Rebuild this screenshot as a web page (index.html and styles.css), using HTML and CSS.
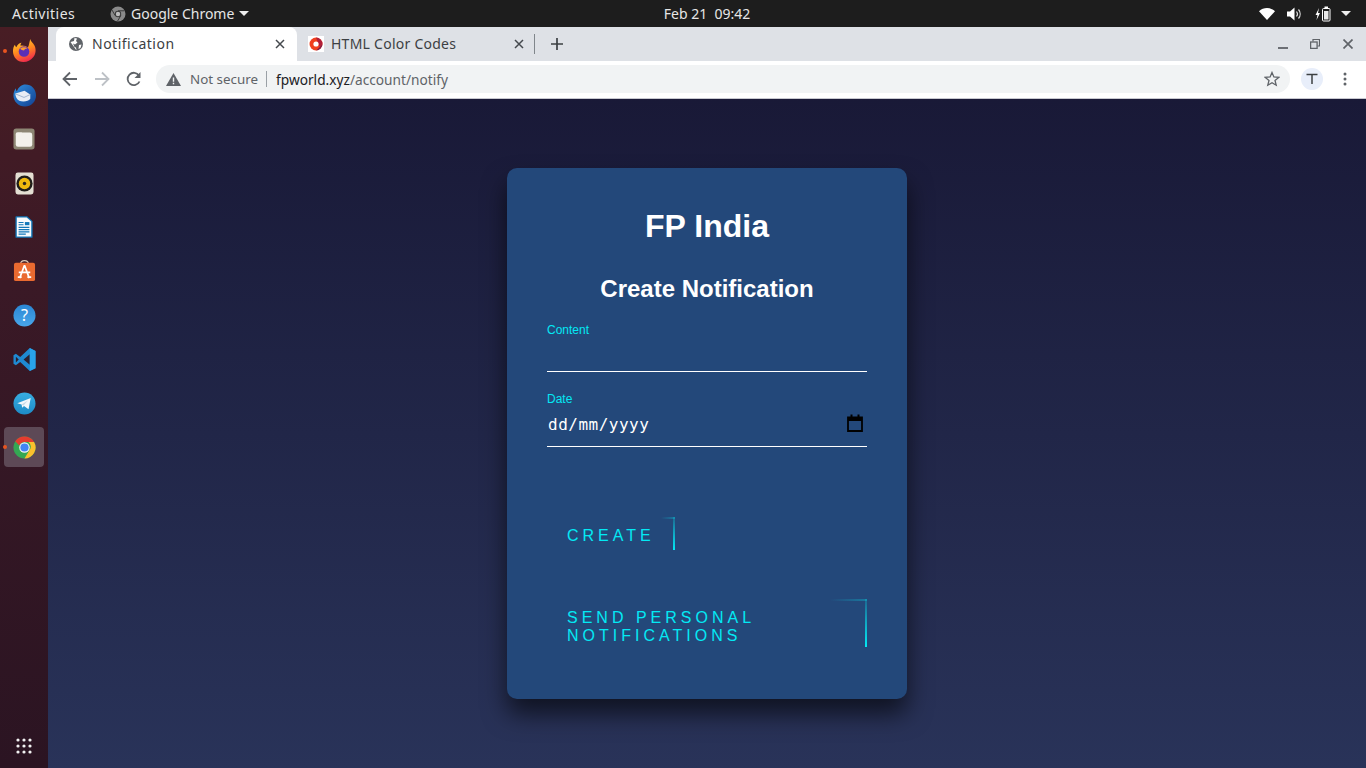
FILE: index.html
```html
<!DOCTYPE html>
<html lang="en">
<head>
<meta charset="utf-8">
<title>Notification</title>
<link rel="stylesheet" href="styles.css">
</head>
<body>
<header class="topbar">
  <div class="top-left">
    <span class="activities">Activities</span>
    <span class="appmenu">
      <svg class="app-ic" width="16" height="16" viewBox="0 0 16 16"><circle cx="8" cy="8" r="7.5" fill="#8a8a8a"/><circle cx="8" cy="8" r="3.2" fill="#3a3a3a"/><circle cx="8" cy="8" r="2.2" fill="#bdbdbd"/><path d="M8 4.8h6.4M5.2 9.6 2 4M10.8 9.6 7.6 15" stroke="#3a3a3a" stroke-width="1" fill="none"/></svg>
      <span>Google Chrome</span>
      <i class="caret"></i>
    </span>
  </div>
  <div class="clock">Feb 21&nbsp; 09:42</div>
  <div class="tray">
    <svg width="16" height="12" viewBox="0 0 16 12"><path d="M0 3.2C4.5-1 11.5-1 16 3.2L8 12Z" fill="#fff"/></svg>
    <svg width="16" height="14" viewBox="0 0 16 14"><path d="M0 4.500h3L7.500.5v13L3 9.500H0Z" fill="#fff"/><path d="M9.500 4.500c1.200 1.500 1.200 3.500 0 5M11.500 2.500c2.200 2.600 2.200 6.400 0 9" stroke="#ddd" stroke-width="1.200" fill="none"/></svg>
    <svg width="16" height="16" viewBox="0 0 16 16"><path d="M4 2 0.500 9h2L1.500 14 5 7H3Z" fill="#fff"/><rect x="7.500" y="2.500" width="7.500" height="12.500" rx="1" fill="#1d1d1d" stroke="#fff"/><rect x="9.500" y="0.500" width="3.500" height="2" fill="#fff"/><rect x="9" y="5" width="4.500" height="8.500" fill="#e8e8e8"/></svg>
    <i class="caret"></i>
  </div>
</header>
<div class="desktop">
  <nav class="dock">
    <div class="dock-item"><i class="run-dot"></i>
      <svg class="ic-firefox" width="25" height="25" viewBox="0 0 26 26"><defs><linearGradient id="ff" x1="0.2" y1="0" x2="0.6" y2="1"><stop offset="0" stop-color="#ffd02e"/><stop offset=".5" stop-color="#ff8a1f"/><stop offset="1" stop-color="#f0264f"/></linearGradient></defs><path d="M19 1c.4 3 3 4 4.500 7 2 4.500 1 9-1.500 12-2.500 3.200-6 5-10 5C5.500 25 1 20 1 13.500 1 11 1.800 8.500 3 7c.3 1.200.8 2 1.500 2.500C5.500 7 8 5 10 5c-1 1 -1.200 2-1 3 3-.5 6 .5 7.500 2C18 7 18 4 19 1Z" fill="url(#ff)"/><circle cx="12.500" cy="14" r="5.500" fill="#5b2fb5"/><path d="M8.500 11c2-2 6-2 7.500 0-2 0-3 1-3.500 2-1.500 0-3-.5-4-2Z" fill="#ff9a2e"/></svg>
    </div>
    <div class="dock-item">
      <svg width="25" height="25" viewBox="0 0 26 26"><defs><linearGradient id="tb" x1="0" y1="0" x2="1" y2="1"><stop offset="0" stop-color="#2f8fe0"/><stop offset="1" stop-color="#123f8f"/></linearGradient></defs><path d="M14 1.500c6.500 0 11 5 11 11.500S20 24.500 13.500 24.500 1.500 19.500 1.500 13c0-3 1-5.500 2.500-7.500 0 1.500.5 2.500 1 3C7 4 10 1.500 14 1.500Z" fill="url(#tb)"/><path d="M3.500 11 13 8l6 4v4.500c-2 3-8 3.500-11.500 2C5 17.500 3.500 14 3.500 11Z" fill="#e8edf5"/><path d="M4 11.500 12.500 15l6.500-3" stroke="#9fb4cf" stroke-width="1" fill="none"/></svg>
    </div>
    <div class="dock-item">
      <svg width="22" height="22" viewBox="0 0 24 24"><rect width="23" height="23" x=".5" y=".5" rx="3" fill="#8d8674"/><rect x="3" y="5" width="18" height="15.500" rx="2.500" fill="#f3f1ec"/><path d="M3 8V6.500A1.500 1.500 0 0 1 4.500 5h5l1.500 1.500" fill="#f3f1ec"/></svg>
    </div>
    <div class="dock-item">
      <svg width="19" height="23" viewBox="0 0 20 24"><rect width="19" height="23" x=".5" y=".5" rx="2.500" fill="#e4dfd3"/><circle cx="10" cy="12" r="8.500" fill="#1f1d1a"/><circle cx="10" cy="12" r="6" fill="#eeb90f"/><circle cx="10" cy="12" r="1.800" fill="#2a2722"/></svg>
    </div>
    <div class="dock-item">
      <svg width="18" height="22" viewBox="0 0 20 24"><path d="M1.500 0h12L19.500 5.500V23a1 1 0 0 1-1 1h-17a1 1 0 0 1-1-1V1a1 1 0 0 1 1-1Z" fill="#1277b8"/><path d="M2 1.500h11L18 6v16.500H2Z" fill="#f7fafc"/><rect x="11" y="6.500" width="5" height="3.500" fill="#1277b8"/><path d="M4 7h5.500M4 9.500h5.500M4 12.500h12M4 15h12M4 17.500h12M4 20h8" stroke="#1277b8" stroke-width="1.300"/></svg>
    </div>
    <div class="dock-item">
      <svg class="ic-up" width="23" height="23" viewBox="0 0 24 24"><path d="M8 5C8 .5 16 .5 16 5" stroke="#d9c9b8" stroke-width="1.200" fill="none"/><rect x="1" y="4" width="22" height="19" rx="2" fill="#ea6a30"/><path d="M12 6.500 7 20M12 6.500 17 20M6 14h12M5 19h4M15 19h4" stroke="#fff" stroke-width="1.800" fill="none"/></svg>
    </div>
    <div class="dock-item">
      <svg width="23" height="23" viewBox="0 0 24 24"><defs><linearGradient id="hp" x1="0" y1="0" x2="0" y2="1"><stop offset="0" stop-color="#2a86d4"/><stop offset="1" stop-color="#49a6ea"/></linearGradient></defs><circle cx="12" cy="12" r="11.500" fill="url(#hp)"/><text x="12" y="18" class="help-mark">?</text></svg>
    </div>
    <div class="dock-item">
      <svg width="23" height="23" viewBox="0 0 24 24"><path d="M17.500 0 23.500 3v18l-6 3L7.500 14.500 3 18l-2.500-1.500v-9L3 6l4.500 3.500Z" fill="#1f8ad2"/><path d="M17.500 6.500 11 12l6.500 5.500Z" fill="#2b2030"/><path d="M3 9v6l3-3Z" fill="#2b2030"/><path d="M17.500 0 23.500 3v18l-6 3Z" fill="#29a3ea"/></svg>
    </div>
    <div class="dock-item">
      <svg width="23" height="23" viewBox="0 0 24 24"><defs><linearGradient id="tg" x1="0" y1="0" x2="0" y2="1"><stop offset="0" stop-color="#38aee2"/><stop offset="1" stop-color="#1d8ac6"/></linearGradient></defs><circle cx="12" cy="12" r="11.500" fill="url(#tg)"/><path d="M4.500 11.800 18.500 6.200 16.200 18 11.500 14.500 9.500 16.500 9 13Z" fill="#f2f7fb"/><path d="M9 13 15.500 8.800 11 14Z" fill="#c5d9e6"/></svg>
    </div>
    <div class="dock-item active"><i class="run-dot"></i>
      <svg width="23" height="23" viewBox="0 0 24 24"><circle cx="12" cy="12" r="11.500" fill="#34a853"/><path d="M12 .5a11.500 11.500 0 0 1 10 5.750H12A5.750 5.750 0 0 0 6.600 10L2.300 5.500A11.500 11.500 0 0 1 12 .5Z" fill="#e53c2f"/><path d="M22 6.250A11.500 11.500 0 0 1 12 23.500l5-8.500a5.750 5.750 0 0 0-1-8.750Z" fill="#fbc02d"/><circle cx="12" cy="12" r="5.500" fill="#f4f4f4"/><circle cx="12" cy="12" r="4.300" fill="#4285f4"/></svg>
    </div>
    <div class="dock-apps">
      <svg width="16" height="16" viewBox="0 0 16 16" fill="#f2f2f2"><circle cx="2" cy="2" r="1.600"/><circle cx="8" cy="2" r="1.600"/><circle cx="14" cy="2" r="1.600"/><circle cx="2" cy="8" r="1.600"/><circle cx="8" cy="8" r="1.600"/><circle cx="14" cy="8" r="1.600"/><circle cx="2" cy="14" r="1.600"/><circle cx="8" cy="14" r="1.600"/><circle cx="14" cy="14" r="1.600"/></svg>
    </div>
  </nav>
  <div class="browser">
    <div class="tabstrip">
      <div class="tab tab-active">
        <svg class="fav" width="14" height="14" viewBox="0 0 14 14"><circle cx="7" cy="7" r="7" fill="#5f6368"/><path d="M1.500 5 5 4l.5-3L8 1.500 7 4l1.500 1.500L6 7.500 4 6.500 5.500 10l1.500.5.500 3M10 8l2.500-.5-1 3.500-2 1Z" fill="#fff"/></svg>
        <span class="tab-title title-a">Notification</span>
        <svg class="tab-x" width="10" height="10" viewBox="0 0 10 10"><path d="M1 1l8 8M9 1l-8 8" stroke="#45494e" stroke-width="1.500"/></svg>
      </div>
      <div class="tab tab-idle">
        <svg class="fav fav-box" width="16" height="16" viewBox="0 0 16 16"><rect width="16" height="16" fill="#fff"/><circle cx="8" cy="8" r="6.500" fill="#f0401f"/><path d="M14.500 8A6.500 6.500 0 0 1 8 14.500C10.500 12.500 12 10.500 14.500 8Z" fill="#7f1d4a"/><path d="M8 1.500A6.500 6.500 0 0 1 14.500 8c-1 1-2 2-3 2.500Z" fill="#b01f3a"/><circle cx="8" cy="8" r="2.600" fill="#fff"/></svg>
        <span class="tab-title title-b">HTML Color Codes</span>
        <svg class="tab-x" width="10" height="10" viewBox="0 0 10 10"><path d="M1 1l8 8M9 1l-8 8" stroke="#45494e" stroke-width="1.500"/></svg>
      </div>
      <i class="tab-sep"></i>
      <svg class="plus" width="12" height="12" viewBox="0 0 12 12"><path d="M6 0v12M0 6h12" stroke="#3c4043" stroke-width="1.700"/></svg>
      <div class="winctl">
        <svg width="10" height="10" viewBox="0 0 10 10"><path d="M0 9h10" stroke="#5f6368" stroke-width="1.800"/></svg>
        <svg width="10" height="10" viewBox="0 0 10 10"><path d="M3 2.500V.5h6.500V7H7.500" stroke="#5f6368" stroke-width="1.200" fill="none"/><rect x=".6" y="3" width="6.500" height="6.400" stroke="#5f6368" stroke-width="1.300" fill="none"/></svg>
        <svg class="win-close" width="10" height="10" viewBox="0 0 10 10"><path d="M.5.500l9 9M9.500.500l-9 9" stroke="#5f6368" stroke-width="1.700"/></svg>
      </div>
    </div>
    <div class="toolbar">
      <svg class="nav" width="16" height="16" viewBox="0 0 16 16"><path d="M15 8H2M8 1.500 1.500 8 8 14.500" stroke="#5f6368" stroke-width="1.800" fill="none"/></svg>
      <svg class="nav" width="16" height="16" viewBox="0 0 16 16"><path d="M1 8h13M8 1.500 14.500 8 8 14.500" stroke="#bdc1c6" stroke-width="1.800" fill="none"/></svg>
      <svg class="nav" width="16" height="16" viewBox="0 0 16 16"><path d="M13.500 10.500A6.200 6.200 0 1 1 13 4.500" stroke="#5f6368" stroke-width="1.800" fill="none"/><path d="M14.500 1v6h-6Z" fill="#5f6368"/></svg>
      <div class="omnibox">
        <svg class="warn" width="15" height="13" viewBox="0 0 15 13"><path d="M7.500 0 15 13H0Z" fill="#5f6368"/><path d="M6.800 4.500h1.400v4.200H6.800ZM6.800 9.800h1.400v1.400H6.800Z" fill="#f1f3f4"/></svg>
        <span class="insecure">Not secure</span>
        <i class="omni-sep"></i>
        <span class="url"><b>fpworld.xyz</b>/account/notify</span>
        <svg class="star" width="16" height="16" viewBox="0 0 16 16"><path d="M8 1.500 9.900 6l4.800.4-3.700 3.100 1.200 4.700L8 11.700l-4.200 2.500L5 9.500 1.300 6.400 6.100 6Z" stroke="#5f6368" stroke-width="1.300" fill="none"/></svg>
      </div>
      <div class="avatar"><svg width="12" height="12" viewBox="0 0 12 12"><path d="M.5 1.500h11M6 1.500v9.500" stroke="#3c4043" stroke-width="1.500" fill="none"/></svg></div>
      <svg class="menu" width="4" height="14" viewBox="0 0 4 14" fill="#5f6368"><circle cx="2" cy="2" r="1.500"/><circle cx="2" cy="7" r="1.500"/><circle cx="2" cy="12" r="1.500"/></svg>
    </div>
    <main class="page">
      <form class="card">
        <h1 class="brand">FP India</h1>
        <h2 class="heading">Create Notification</h2>
        <label class="field field-content">
          <span class="field-label">Content</span>
          <input class="field-input" type="text">
        </label>
        <div class="field field-date">
          <span class="field-label">Date</span>
          <div class="date-row">
            <span class="date-text">dd/mm/yyyy</span>
            <svg class="cal" width="16" height="18" viewBox="0 0 16 18"><path d="M1 3.500h14V17H1Z" fill="none" stroke="#000" stroke-width="1.800"/><path d="M1 3h14v4H1ZM3.500.5h2V3h-2ZM10.500.5h2V3h-2Z" fill="#000"/></svg>
          </div>
        </div>
        <button class="neon neon-create" type="button">Create</button>
        <button class="neon neon-send" type="button">Send personal notifications</button>
      </form>
    </main>
  </div>
</div>
</body>
</html>
```

FILE: styles.css
```css
* { box-sizing: border-box; }
html, body { margin: 0; height: 100%; overflow: hidden; }
body { width: 1366px; height: 768px; display: flex; flex-direction: column; font-family: "Noto Sans", sans-serif; }
i { display: block; }

.topbar { height: 27px; flex: none; background: #1d1d1d; color: #e6e6e6; font-size: 14px; display: grid; grid-template-columns: 1fr auto 1fr; align-items: center; padding: 0 12px; }
.top-left { display: flex; align-items: center; }
.activities { width: 98px; letter-spacing: .5px; }
.appmenu { display: flex; align-items: center; }
.app-ic { margin-right: 5px; }
.caret { width: 0; height: 0; border-left: 5px solid transparent; border-right: 5px solid transparent; border-top: 5px solid #eee; margin-left: 5px; }
.clock { text-align: center; margin-left: 48px; }
.tray { display: flex; justify-content: flex-end; align-items: center; gap: 12px; padding-right: 3px; }
.tray .caret { margin-left: -2px; }

.desktop { flex: 1; display: flex; min-height: 0; }
.dock { width: 48px; flex: none; background: linear-gradient(180deg, #481d24 0%, #3a1926 35%, #2b1422 100%); display: flex; flex-direction: column; align-items: center; padding-top: 2px; }
.dock-item { position: relative; width: 40px; height: 40px; margin: 2px 0; display: flex; align-items: center; justify-content: center; border-radius: 4px; }
.dock-item.active { background: #5d4956; }
.ic-firefox { margin-top: -2px; }
.ic-up { margin-top: -2px; }
.run-dot { position: absolute; left: -1px; top: 18px; width: 4px; height: 4px; border-radius: 50%; background: #e95420; }
.dock-apps { margin-top: auto; height: 44px; display: flex; align-items: center; justify-content: center; }
.help-mark { font-family: "Noto Sans", sans-serif; font-size: 17px; fill: #fff; text-anchor: middle; }

.browser { flex: 1; display: flex; flex-direction: column; min-width: 0; }
.tabstrip { height: 34px; flex: none; background: #dee1e6; display: flex; align-items: center; padding-left: 8px; color: #3c4043; font-size: 14px; }
.tab { width: 241px; height: 34px; display: flex; align-items: center; padding: 0 12px 1px 12px; }
.tab-active { background: #fff; border-radius: 8px 8px 0 0; padding-left: 13px; }
.tab-idle { padding-right: 14px; }
.fav { margin-right: 9px; flex: none; }
.fav-box { margin-right: 7px; margin-left: -1px; }
.tab-title { flex: 1; white-space: nowrap; }
.title-a { letter-spacing: .5px; }
.title-b { letter-spacing: .25px; }
.tab-x { flex: none; }
.tab-active .tab-x { margin-right: 0; }
.tab-sep { width: 1px; height: 20px; background: #80868b; margin-left: -4px; }
.plus { margin-left: 16px; }
.winctl { margin-left: auto; display: flex; align-items: center; gap: 22px; padding-right: 13px; }
.win-close { margin-left: 1px; }

.toolbar { height: 38px; flex: none; background: #fff; border-bottom: 1px solid #c8c8d0; display: flex; align-items: center; padding: 0 0 1px 14px; }
.nav { margin-right: 16px; flex: none; }
.omnibox { margin-left: -2px; width: 1134px; height: 28px; border-radius: 14px; background: #f1f3f4; display: flex; align-items: center; padding: 0 10px 0 10px; font-size: 14px; color: #5f6368; }
.warn { margin-right: 9px; }
.insecure { font-size: 13.4px; }
.omni-sep { width: 1px; height: 16px; background: #9aa0a6; margin: 0 9px 0 8px; }
.url { flex: 1; font-size: 13.7px; }
.url b { font-weight: 400; color: #202124; }
.avatar { width: 22px; height: 22px; margin-left: 11px; border-radius: 50%; background: #e8eefa; display: flex; align-items: center; justify-content: center; }
.menu { margin-left: 20px; }

.page { flex: 1; background: linear-gradient(180deg, #191937 0%, #293359 100%); display: flex; justify-content: flex-start; padding: 69px 0 0 459px; }
.card { width: 400px; height: 531px; background: #23487a; border-radius: 10px; padding: 40px; box-shadow: 0 15px 25px rgba(0, 0, 0, .6); font-family: "Liberation Sans", Arial, sans-serif; display: flex; flex-direction: column; align-items: flex-start; }
.brand { margin: 0; width: 100%; text-align: center; color: #fff; font-size: 32px; line-height: 37px; font-weight: 700; }
.heading { margin: 30px 0 0; width: 100%; text-align: center; color: #fff; font-size: 24px; line-height: 28px; font-weight: 700; }
.field { display: block; width: 100%; }
.field-label { display: block; color: #03e9f4; font-size: 12px; line-height: 14px; }
.field-content { margin-top: 20px; }
.field-input { display: block; width: 100%; height: 35px; margin: 0; padding: 0; background: transparent; border: 0; border-bottom: 1px solid #fff; outline: 0; color: #fff; font-size: 16px; }
.field-date { margin-top: 20px; }
.date-row { height: 41px; border-bottom: 1px solid #fff; display: flex; align-items: center; justify-content: space-between; padding: 0 4px 4px 1px; }
.date-text { color: #fff; font-family: "DejaVu Sans Mono", monospace; font-size: 16px; letter-spacing: .5px; }
.cal { flex: none; margin-top: -2px; }

.neon { position: relative; display: block; padding: 10px 20px; background: transparent; border: 0; color: #03e9f4; font: 16px/18px "Liberation Sans", Arial, sans-serif; letter-spacing: 4px; text-transform: uppercase; text-align: left; }
.neon::before { content: ""; position: absolute; top: 0; right: 0; height: 2px; background: linear-gradient(90deg, transparent, #03e9f4); opacity: .3; }
.neon::after { content: ""; position: absolute; top: 0; right: 0; width: 2px; height: 100%; background: linear-gradient(180deg, rgba(3, 233, 244, .2), #03e9f4); }
.neon-create { margin-top: 70px; width: 128px; height: 33px; padding-top: 10px; padding-bottom: 5px; }
.neon-create::before { width: 14px; }
.neon-send { margin-top: 49px; width: 320px; height: 48px; padding-top: 10px; padding-bottom: 2px; padding-right: 100px; }
.neon-send::before { width: 37px; }
```
